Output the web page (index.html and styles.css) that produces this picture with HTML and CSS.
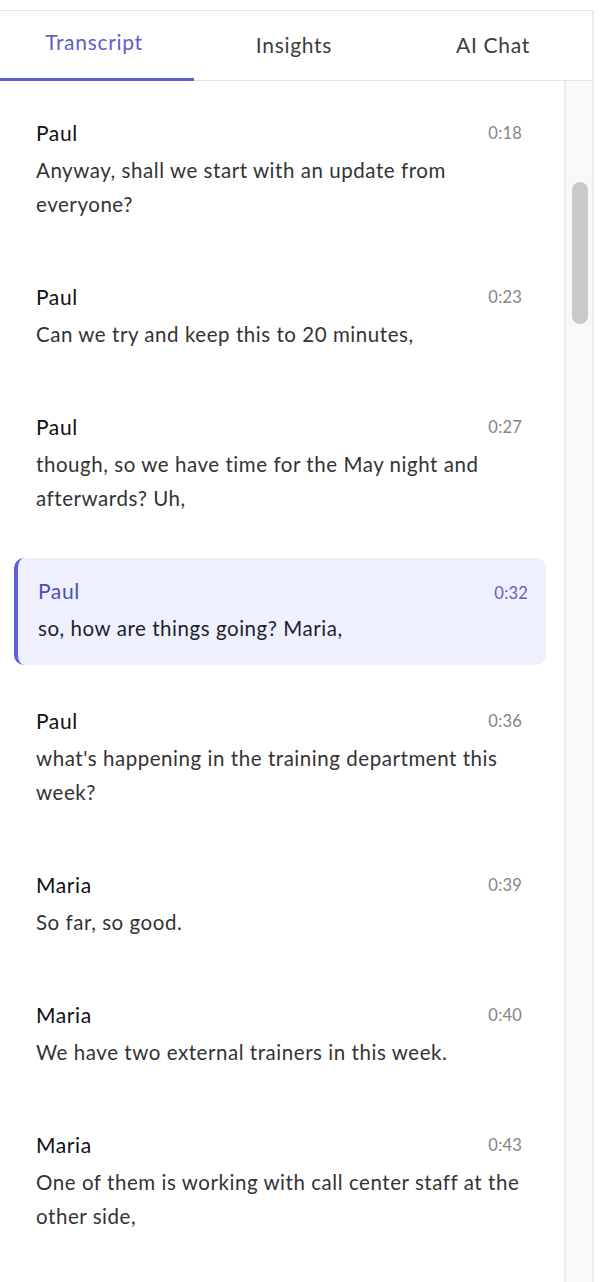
FILE: index.html
```html
<!DOCTYPE html>
<html lang="en">
<head>
<meta charset="utf-8">
<title>Transcript</title>
<link rel="stylesheet" href="styles.css">
</head>
<body>
<div class="panel">
  <nav class="tabs">
    <div class="tab active">Transcript</div>
    <div class="tab">Insights</div>
    <div class="tab">AI Chat</div>
  </nav>
  <div class="content">
    <div class="list">
      <div class="entry">
        <div class="head"><span class="name">Paul</span><span class="time">0:18</span></div>
        <p class="text">Anyway, shall we start with an update from everyone?</p>
      </div>
      <div class="entry">
        <div class="head"><span class="name">Paul</span><span class="time">0:23</span></div>
        <p class="text">Can we try and keep this to 20 minutes,</p>
      </div>
      <div class="entry">
        <div class="head"><span class="name">Paul</span><span class="time">0:27</span></div>
        <p class="text">though, so we have time for the May night and afterwards? Uh,</p>
      </div>
      <div class="entry current">
        <div class="head"><span class="name">Paul</span><span class="time">0:32</span></div>
        <p class="text">so, how are things going? Maria,</p>
      </div>
      <div class="entry">
        <div class="head"><span class="name">Paul</span><span class="time">0:36</span></div>
        <p class="text">what's happening in the training department this week?</p>
      </div>
      <div class="entry">
        <div class="head"><span class="name">Maria</span><span class="time">0:39</span></div>
        <p class="text">So far, so good.</p>
      </div>
      <div class="entry">
        <div class="head"><span class="name">Maria</span><span class="time">0:40</span></div>
        <p class="text">We have two external trainers in this week.</p>
      </div>
      <div class="entry">
        <div class="head"><span class="name">Maria</span><span class="time">0:43</span></div>
        <p class="text">One of them is working with call center staff at the other side,</p>
      </div>
    </div>
    <div class="track"><div class="thumb"></div></div>
  </div>
</div>
</body>
</html>
```
FILE: styles.css
```css
html, body {
  margin: 0;
  padding: 0;
  background: #ffffff;
  overflow: hidden;
}
body {
  font-family: Lato, "Open Sans", sans-serif;
  color: #222222;
}
.panel {
  margin-top: 10px;
  width: 592px;
  height: 1272px;
  border-top: 1px solid #e8e8e8;
  border-right: 2px solid #ececec;
  display: flex;
  flex-direction: column;
  overflow: hidden;
}
.tabs {
  display: grid;
  grid-template-columns: 194px 200px 198px;
  height: 69px;
  border-bottom: 1px solid #e3e3e3;
  flex: none;
}
.tab {
  display: flex;
  align-items: center;
  justify-content: center;
  font-size: 21px;
  letter-spacing: 0.7px;
  color: #3c3c3c;
  padding-bottom: 2px;
  box-sizing: border-box;
}
.tab.active {
  color: #5d5fc9;
  border-bottom: 3px solid #5d5fc9;
  margin-bottom: -1px;
  padding: 0 6px 6px 0;
}
.content {
  display: flex;
  flex: 1;
  min-height: 0;
}
.list {
  flex: 1;
  padding-top: 19px;
}
.entry {
  margin: 0 18px 23px 14px;
  padding: 20px 24px 20px 22px;
  border-radius: 10px;
}
.entry.current {
  background: #eef1fd;
  border-left: 4px solid #5d5fe0;
  padding-left: 20px;
  padding-right: 18px;
}
.head {
  display: flex;
  justify-content: space-between;
  align-items: center;
  height: 24px;
  margin-bottom: 9px;
}
.name {
  font-size: 21px;
  letter-spacing: 0.6px;
  color: #111111;
}
.time {
  font-size: 16.5px;
  letter-spacing: 0.2px;
  color: #858585;
  padding-top: 2px;
}
.current .name {
  color: #4c4fb8;
}
.current .time {
  color: #5d60c4;
  padding-top: 5px;
}
.text {
  margin: 0;
  font-size: 20.5px;
  letter-spacing: 0.55px;
  line-height: 34px;
  color: #333333;
}
.current .text {
  color: #1e1e2e;
}
.track {
  width: 26px;
  flex: none;
  background: #f8f8f8;
  border-left: 2px solid #ececec;
}
.thumb {
  margin: 101px 0 0 6px;
  width: 16px;
  height: 142px;
  border-radius: 8px;
  background: #c9c9c9;
}
```
